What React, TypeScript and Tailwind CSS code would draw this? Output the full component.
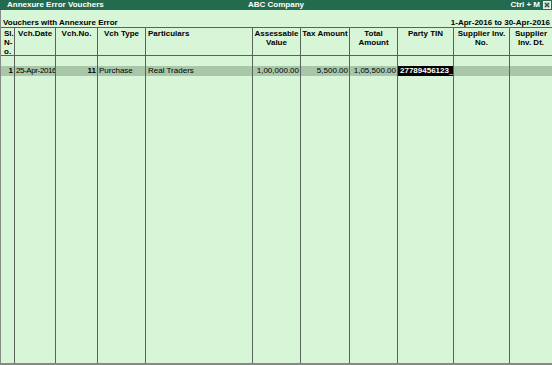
import React from 'react';

/**
 * Annexure Error Vouchers report (Tally style)
 */

interface Column {
  width: string;
  head: string[];
  headAlign: string;
  value?: string;
  valueClass?: string;
}

const columns: Column[] = [
  { width: 'w-[14px]', head: ['Sl.', 'N-', 'o.'], headAlign: 'text-left pl-[3px]', value: '1', valueClass: 'text-right pr-[1px] font-bold' },
  { width: 'w-[41px]', head: ['Vch.Date'], headAlign: 'text-center', value: '25-Apr-2016', valueClass: 'text-left pl-[1px] tracking-[-0.4px]' },
  { width: 'w-[42px]', head: ['Vch.No.'], headAlign: 'text-center', value: '11', valueClass: 'text-right pr-[1px] font-bold' },
  { width: 'w-[48px]', head: ['Vch Type'], headAlign: 'text-center', value: 'Purchase', valueClass: 'text-left pl-[1px]' },
  { width: 'w-[107px]', head: ['Particulars'], headAlign: 'text-left pl-[2px]', value: 'Real Traders', valueClass: 'text-left pl-[2px]' },
  { width: 'w-[48px]', head: ['Assessable', 'Value'], headAlign: 'text-center', value: '1,00,000.00', valueClass: 'text-right pr-[1px]' },
  { width: 'w-[49px]', head: ['Tax Amount'], headAlign: 'text-center', value: '5,500.00', valueClass: 'text-right pr-[1px]' },
  { width: 'w-[48px]', head: ['Total', 'Amount'], headAlign: 'text-center', value: '1,05,500.00', valueClass: 'text-right pr-[1px]' },
  { width: 'w-[56px]', head: ['Party TIN'], headAlign: 'text-center' },
  { width: 'w-[56px]', head: ['Supplier Inv.', 'No.'], headAlign: 'text-center' },
  { width: 'w-[42px]', head: ['Supplier', 'Inv. Dt.'], headAlign: 'text-center' },
];

function CloseBox() {
  return (
    <svg width="8" height="8" viewBox="0 0 8 8" className="block">
      <rect x="0.5" y="0.5" width="7" height="7" fill="#c9dcd2" stroke="#e8f0ec" />
      <path d="M2 2 L6 6 M6 2 L2 6" stroke="#2a4a3c" strokeWidth="1.2" />
    </svg>
  );
}

export default function App() {
  return (
    <div className="w-[552px] h-[365px] flex flex-col overflow-hidden bg-[#d7f5d7] text-black text-[8px] font-['Liberation_Sans',Arial,sans-serif]">
      {/* Title bar */}
      <div className="h-[10px] grid grid-cols-[1fr_auto_1fr] items-center bg-[#236a4f] text-white font-bold leading-[10px]">
        <div className="pl-[7px]">Annexure Error Vouchers</div>
        <div>ABC Company</div>
        <div className="flex items-center justify-end gap-[3px] pr-[1px]">
          <span>Ctrl + M</span>
          <CloseBox />
        </div>
      </div>

      <div className="flex-1 flex flex-col border-l border-b-2 border-[#858a85]">
        {/* Sub header */}
        <div className="h-[18px] flex items-end justify-between px-[2px] font-bold leading-[9px] border-b border-[#5a625a]">
          <span>Vouchers with Annexure Error</span>
          <span>1-Apr-2016 to 30-Apr-2016</span>
        </div>

        {/* Columns */}
        <div className="flex-1 flex">
          {columns.map((col, i) => (
            <div
              key={i}
              className={`${col.width} shrink-0 flex flex-col ${i < columns.length - 1 ? 'border-r border-[#5a625a]' : ''}`}
            >
              <div className={`h-[28px] pt-[1px] border-b border-[#5a625a] font-bold leading-[9px] ${col.headAlign}`}>
                {col.head.map((line, j) => (
                  <div key={j} className="whitespace-nowrap">{line}</div>
                ))}
              </div>
              <div className="h-[10px]" />
              {i === 8 ? (
                <div className="h-[10px] leading-[10px] bg-black text-white font-bold pl-[2px] whitespace-nowrap overflow-hidden">
                  27789456123<span className="font-normal">_</span>
                </div>
              ) : (
                <div className={`h-[10px] leading-[10px] bg-[#a8c6a8] whitespace-nowrap overflow-hidden ${col.valueClass ?? ''}`}>
                  {col.value}
                </div>
              )}
              <div className="flex-1" />
            </div>
          ))}
        </div>
      </div>
    </div>
  );
}
